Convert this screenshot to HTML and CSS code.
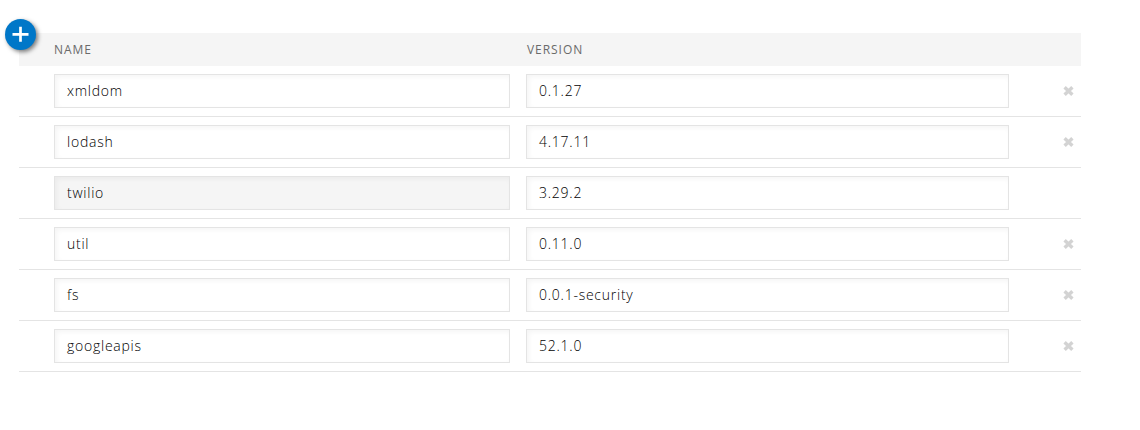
FILE: index.html
```
<!DOCTYPE html>
<html lang="en">
<head>
<meta charset="utf-8">
<title>Dependencies</title>
<link rel="stylesheet" href="styles.css">
</head>
<body>
<main class="dependencies">
  <button class="add" aria-label="Add"><svg width="17" height="17" viewBox="0 0 17 17"><path d="M8.5 .8v15M.5 8.3h16" stroke="#fff" stroke-width="2.7"/></svg></button>
  <div class="row head"><span class="name-label">NAME</span><span>VERSION</span></div>
  <div class="row"><div class="field">xmldom</div><div class="field">0.1.27</div><span class="remove"><svg width="11" height="10" viewBox="0 0 11 10"><path d="M1.6 1.3l7.8 7.4M9.4 1.3l-7.8 7.4"/></svg></span></div>
  <div class="row"><div class="field">lodash</div><div class="field">4.17.11</div><span class="remove"><svg width="11" height="10" viewBox="0 0 11 10"><path d="M1.6 1.3l7.8 7.4M9.4 1.3l-7.8 7.4"/></svg></span></div>
  <div class="row"><div class="field locked">twilio</div><div class="field">3.29.2</div></div>
  <div class="row"><div class="field">util</div><div class="field">0.11.0</div><span class="remove"><svg width="11" height="10" viewBox="0 0 11 10"><path d="M1.6 1.3l7.8 7.4M9.4 1.3l-7.8 7.4"/></svg></span></div>
  <div class="row"><div class="field">fs</div><div class="field">0.0.1-security</div><span class="remove"><svg width="11" height="10" viewBox="0 0 11 10"><path d="M1.6 1.3l7.8 7.4M9.4 1.3l-7.8 7.4"/></svg></span></div>
  <div class="row"><div class="field">googleapis</div><div class="field">52.1.0</div><span class="remove"><svg width="11" height="10" viewBox="0 0 11 10"><path d="M1.6 1.3l7.8 7.4M9.4 1.3l-7.8 7.4"/></svg></span></div>
</main>
</body>
</html>
```
FILE: styles.css
```
* { box-sizing: border-box; }
body {
  margin: 0;
  background: #fff;
  font-family: "Open Sans", "Noto Sans", sans-serif;
}
.dependencies {
  position: relative;
  width: 1062px;
  margin: 33px 0 0 19px;
}
.row {
  display: grid;
  grid-template-columns: 456px 483px 1fr;
  column-gap: 16px;
  align-items: center;
  height: 51px;
  padding-left: 35px;
  border-bottom: 1px solid #e4e4e4;
}
.head {
  height: 33px;
  border: 0;
  background: #f5f5f5;
  color: #6a6a6a;
  font-size: 12px;
  letter-spacing: 0.95px;
}
.head span { padding-left: 1px; }
.head .name-label { padding-left: 0; }
.field {
  height: 34px;
  padding: 0 12px;
  border: 1px solid #e4e4e4;
  box-shadow: inset 2px 2px 5px rgba(0, 0, 0, 0.045);
  color: #000;
  font-size: 14px;
  font-weight: 300;
  letter-spacing: 0.75px;
  line-height: 32px;
}
.locked { background: #f5f5f5; }
.remove {
  display: flex;
  justify-content: flex-end;
  padding-right: 7px;
}
.remove path {
  stroke: #d3d3d3;
  stroke-width: 3.4;
}
.add {
  position: absolute;
  top: -14px;
  left: -14px;
  display: flex;
  align-items: center;
  justify-content: center;
  width: 31px;
  height: 31px;
  padding: 0;
  border: 0;
  border-radius: 50%;
  background: #0077c8;
  box-shadow: 2px 2px 4px rgba(0, 0, 0, 0.5);
}
```
